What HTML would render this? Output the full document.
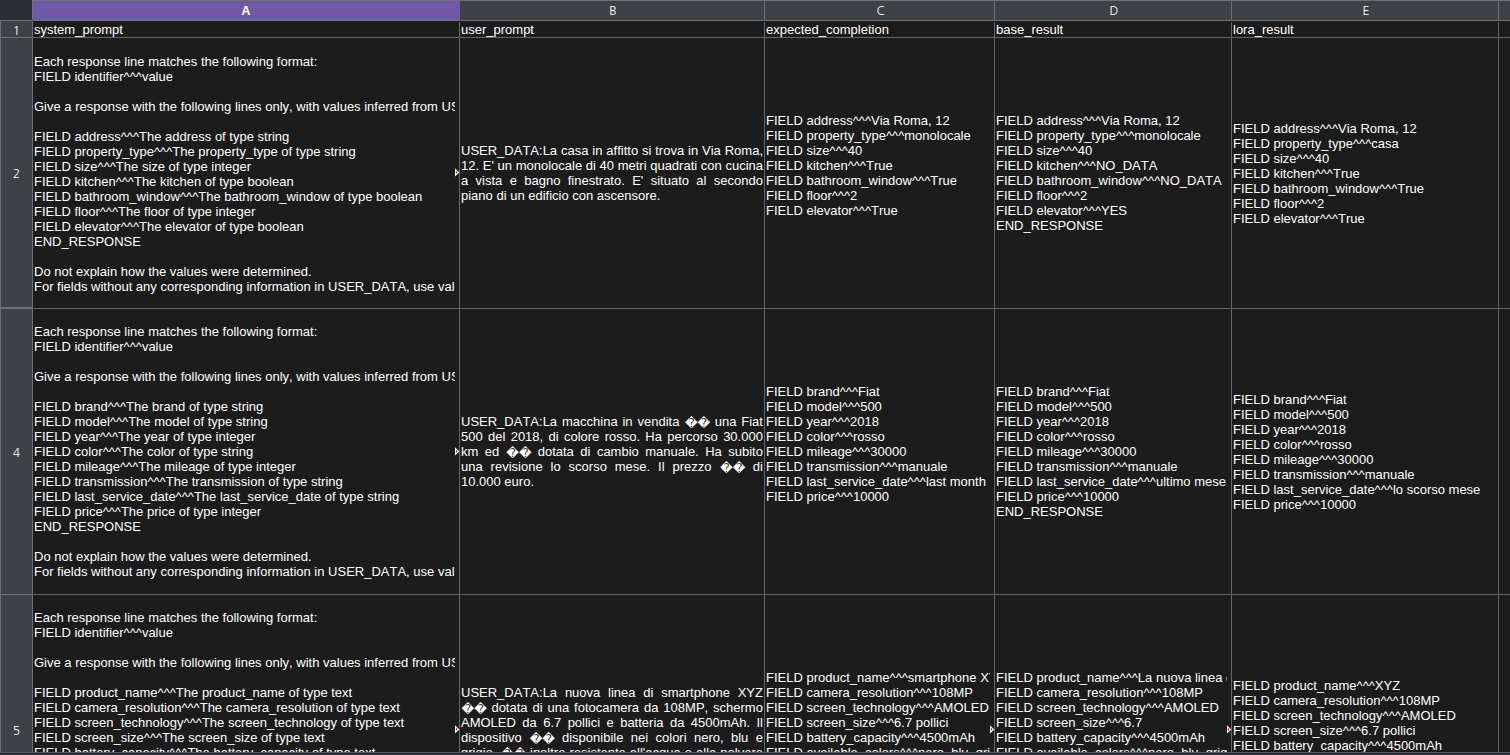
<!DOCTYPE html>
<html lang="it"><head><meta charset="utf-8"><title>sheet</title>
<style>
html,body{margin:0;padding:0}
body{width:1510px;height:755px;overflow:hidden;background:#1c1c1c;position:relative;font-family:"Liberation Sans",sans-serif;font-size:13px;line-height:15px;color:#ffffff;font-kerning:none}
.a{position:absolute}
.l{position:absolute;white-space:pre;height:15px;line-height:15px;overflow:visible}
.c{position:absolute;overflow:hidden}
.j{position:absolute;height:15px;line-height:15px;display:flex;justify-content:space-between;align-items:baseline;flex-wrap:nowrap;white-space:pre}
.jl{position:absolute;height:15px;line-height:15px;white-space:pre}
.h{position:absolute;text-align:center;font-family:"NanumGothic","Noto Sans CJK SC","DejaVu Sans",sans-serif;color:#ffffff}
.r{font-family:"DejaVu Sans",sans-serif;font-size:12.3px;position:relative;top:1px;left:0.6px;line-height:1px;margin-right:0.3px}

</style></head><body>
<div class="a" style="left:0;top:0;width:32px;height:20px;background:#2b2e33"></div>
<div class="a" style="left:32px;top:0;width:1478px;height:21px;background:#3e4146"></div>
<div class="a" style="left:32px;top:0;width:1478px;height:1px;background:#6e7276"></div>
<div class="a" style="left:0;top:20px;width:1510px;height:1px;background:#6d7175"></div>
<div class="a" style="left:33px;top:0;width:426px;height:1px;background:#6f7370"></div>
<div class="a" style="left:459px;top:0;width:1px;height:1px;background:#7058a8"></div>
<div class="a" style="left:33px;top:1px;width:427px;height:19px;background:#7058a8"></div>
<div class="a" style="left:33px;top:20px;width:427px;height:1px;background:#727571"></div>
<div class="a" style="left:32px;top:1px;width:1px;height:20px;background:#6d7175"></div>
<div class="a" style="left:764px;top:1px;width:1px;height:20px;background:#6d7175"></div>
<div class="a" style="left:994px;top:1px;width:1px;height:20px;background:#6d7175"></div>
<div class="a" style="left:1231px;top:1px;width:1px;height:20px;background:#6d7175"></div>
<div class="a" style="left:1498px;top:1px;width:1px;height:20px;background:#6d7175"></div>
<div class="a" style="left:32px;top:0;width:1px;height:20px;background:#6e7270"></div>
<div class="a" style="left:32px;top:20px;width:1px;height:1px;background:#2c2c2e"></div>
<div class="a" style="left:0;top:21px;width:33px;height:734px;background:#3e4146"></div>
<div class="a" style="left:0;top:20px;width:1px;height:735px;background:#6d7175"></div>
<div class="a" style="left:32px;top:21px;width:1px;height:734px;background:#6d7175"></div>
<div class="a" style="left:0;top:37px;width:33px;height:1px;background:#6d7175"></div>
<div class="a" style="left:0;top:307px;width:33px;height:2px;background:#6d7175"></div>
<div class="a" style="left:0;top:594px;width:33px;height:1px;background:#6d7175"></div>
<div class="a" style="left:459px;top:22px;width:1px;height:733px;background:#666666"></div>
<div class="a" style="left:764px;top:22px;width:1px;height:733px;background:#666666"></div>
<div class="a" style="left:994px;top:22px;width:1px;height:733px;background:#666666"></div>
<div class="a" style="left:1231px;top:22px;width:1px;height:733px;background:#666666"></div>
<div class="a" style="left:1498px;top:22px;width:1px;height:733px;background:#666666"></div>
<div class="a" style="left:33px;top:37px;width:1477px;height:1px;background:#666666"></div>
<div class="a" style="left:33px;top:308px;width:1477px;height:1px;background:#666666"></div>
<div class="a" style="left:33px;top:594px;width:1477px;height:1px;background:#666666"></div>
<div class="h" style="left:33.1px;top:1px;width:426px;height:19px;line-height:19px;font-size:11.5px;transform:scaleX(1.12);font-weight:bold;color:#fff;font-family:'Noto Sans CJK SC','DejaVu Sans',sans-serif">A</div>
<div class="h" style="left:461px;top:2px;width:304px;height:19px;line-height:19px;font-size:12.2px">B</div>
<div class="h" style="left:766px;top:2px;width:229px;height:19px;line-height:19px;font-size:12.2px">C</div>
<div class="h" style="left:996px;top:2px;width:236px;height:19px;line-height:19px;font-size:12.2px">D</div>
<div class="h" style="left:1233px;top:2px;width:266px;height:19px;line-height:19px;font-size:12.2px">E</div>
<div class="h" style="left:1px;top:21px;width:31px;height:20px;line-height:20px;font-size:12.2px;">1</div>
<div class="h" style="left:1px;top:164px;width:31px;height:20px;line-height:20px;font-size:12.2px;">2</div>
<div class="h" style="left:1px;top:442.5px;width:31px;height:20px;line-height:20px;font-size:12.2px;">4</div>
<div class="h" style="left:1px;top:721px;width:31px;height:20px;line-height:20px;font-size:12.2px;">5</div>
<div class="c" style="left:33px;top:21px;width:426px;height:16px">
<div class="l" style="left:1px;top:1px">system_prompt</div>
</div>
<div class="c" style="left:460px;top:21px;width:304px;height:16px">
<div class="l" style="left:1px;top:1px">user_prompt</div>
</div>
<div class="c" style="left:765px;top:21px;width:229px;height:16px">
<div class="l" style="left:1px;top:1px">expected_completion</div>
</div>
<div class="c" style="left:995px;top:21px;width:236px;height:16px">
<div class="l" style="left:1px;top:1px">base_result</div>
</div>
<div class="c" style="left:1232px;top:21px;width:266px;height:16px">
<div class="l" style="left:1px;top:1px">lora_result</div>
</div>
<div class="c" style="left:33px;top:38px;width:422px;height:270px">
<div class="l" style="left:1px;top:16px">Each response line matches the following format:</div>
<div class="l" style="left:1px;top:31px">FIELD identifier^^^value</div>
<div class="l" style="left:1px;top:61px">Give a response with the following lines only, with values inferred from USER_DATA:</div>
<div class="l" style="left:1px;top:91px">FIELD address^^^The address of type string</div>
<div class="l" style="left:1px;top:106px">FIELD property_type^^^The property_type of type string</div>
<div class="l" style="left:1px;top:121px">FIELD size^^^The size of type integer</div>
<div class="l" style="left:1px;top:136px">FIELD kitchen^^^The kitchen of type boolean</div>
<div class="l" style="left:1px;top:151px">FIELD bathroom_window^^^The bathroom_window of type boolean</div>
<div class="l" style="left:1px;top:166px">FIELD floor^^^The floor of type integer</div>
<div class="l" style="left:1px;top:181px">FIELD elevator^^^The elevator of type boolean</div>
<div class="l" style="left:1px;top:196px">END_RESPONSE</div>
<div class="l" style="left:1px;top:226px">Do not explain how the values were determined.</div>
<div class="l" style="left:1px;top:241px">For fields without any corresponding information in USER_DATA, use val</div>
</div>
<div class="c" style="left:460px;top:38px;width:304px;height:270px">
<div class="j" style="left:1px;top:105px;width:302px"><span>USER_DATA:La</span> <span>casa</span> <span>in</span> <span>affitto</span> <span>si</span> <span>trova</span> <span>in</span> <span>Via</span> <span>Roma,</span></div>
<div class="j" style="left:1px;top:120px;width:302px"><span>12.</span> <span>E'</span> <span>un</span> <span>monolocale</span> <span>di</span> <span>40</span> <span>metri</span> <span>quadrati</span> <span>con</span> <span>cucina</span></div>
<div class="j" style="left:1px;top:135px;width:302px"><span>a</span> <span>vista</span> <span>e</span> <span>bagno</span> <span>finestrato.</span> <span>E'</span> <span>situato</span> <span>al</span> <span>secondo</span></div>
<div class="jl" style="left:1px;top:150px">piano di un edificio con ascensore.</div>
</div>
<div class="c" style="left:765px;top:38px;width:229px;height:270px">
<div class="l" style="left:1px;top:75px">FIELD address^^^Via Roma, 12</div>
<div class="l" style="left:1px;top:90px">FIELD property_type^^^monolocale</div>
<div class="l" style="left:1px;top:105px">FIELD size^^^40</div>
<div class="l" style="left:1px;top:120px">FIELD kitchen^^^True</div>
<div class="l" style="left:1px;top:135px">FIELD bathroom_window^^^True</div>
<div class="l" style="left:1px;top:150px">FIELD floor^^^2</div>
<div class="l" style="left:1px;top:165px">FIELD elevator^^^True</div>
</div>
<div class="c" style="left:995px;top:38px;width:236px;height:270px">
<div class="l" style="left:1px;top:75px">FIELD address^^^Via Roma, 12</div>
<div class="l" style="left:1px;top:90px">FIELD property_type^^^monolocale</div>
<div class="l" style="left:1px;top:105px">FIELD size^^^40</div>
<div class="l" style="left:1px;top:120px">FIELD kitchen^^^NO_DATA</div>
<div class="l" style="left:1px;top:135px">FIELD bathroom_window^^^NO_DATA</div>
<div class="l" style="left:1px;top:150px">FIELD floor^^^2</div>
<div class="l" style="left:1px;top:165px">FIELD elevator^^^YES</div>
<div class="l" style="left:1px;top:180px">END_RESPONSE</div>
</div>
<div class="c" style="left:1232px;top:38px;width:266px;height:270px">
<div class="l" style="left:1px;top:83px">FIELD address^^^Via Roma, 12</div>
<div class="l" style="left:1px;top:98px">FIELD property_type^^^casa</div>
<div class="l" style="left:1px;top:113px">FIELD size^^^40</div>
<div class="l" style="left:1px;top:128px">FIELD kitchen^^^True</div>
<div class="l" style="left:1px;top:143px">FIELD bathroom_window^^^True</div>
<div class="l" style="left:1px;top:158px">FIELD floor^^^2</div>
<div class="l" style="left:1px;top:173px">FIELD elevator^^^True</div>
</div>
<div class="c" style="left:33px;top:309px;width:422px;height:285px">
<div class="l" style="left:1px;top:15px">Each response line matches the following format:</div>
<div class="l" style="left:1px;top:30px">FIELD identifier^^^value</div>
<div class="l" style="left:1px;top:60px">Give a response with the following lines only, with values inferred from USER_DATA:</div>
<div class="l" style="left:1px;top:90px">FIELD brand^^^The brand of type string</div>
<div class="l" style="left:1px;top:105px">FIELD model^^^The model of type string</div>
<div class="l" style="left:1px;top:120px">FIELD year^^^The year of type integer</div>
<div class="l" style="left:1px;top:135px">FIELD color^^^The color of type string</div>
<div class="l" style="left:1px;top:150px">FIELD mileage^^^The mileage of type integer</div>
<div class="l" style="left:1px;top:165px">FIELD transmission^^^The transmission of type string</div>
<div class="l" style="left:1px;top:180px">FIELD last_service_date^^^The last_service_date of type string</div>
<div class="l" style="left:1px;top:195px">FIELD price^^^The price of type integer</div>
<div class="l" style="left:1px;top:210px">END_RESPONSE</div>
<div class="l" style="left:1px;top:240px">Do not explain how the values were determined.</div>
<div class="l" style="left:1px;top:255px">For fields without any corresponding information in USER_DATA, use val</div>
</div>
<div class="c" style="left:460px;top:309px;width:304px;height:285px">
<div class="j" style="left:1px;top:105px;width:302px"><span>USER_DATA:La</span> <span>macchina</span> <span>in</span> <span>vendita</span> <span class="r">��</span> <span>una</span> <span>Fiat</span></div>
<div class="j" style="left:1px;top:120px;width:302px"><span>500</span> <span>del</span> <span>2018,</span> <span>di</span> <span>colore</span> <span>rosso.</span> <span>Ha</span> <span>percorso</span> <span>30.000</span></div>
<div class="j" style="left:1px;top:135px;width:302px"><span>km</span> <span>ed</span> <span class="r">��</span> <span>dotata</span> <span>di</span> <span>cambio</span> <span>manuale.</span> <span>Ha</span> <span>subito</span></div>
<div class="j" style="left:1px;top:150px;width:302px"><span>una</span> <span>revisione</span> <span>lo</span> <span>scorso</span> <span>mese.</span> <span>Il</span> <span>prezzo</span> <span class="r">��</span> <span>di</span></div>
<div class="jl" style="left:1px;top:165px">10.000 euro.</div>
</div>
<div class="c" style="left:765px;top:309px;width:229px;height:285px">
<div class="l" style="left:1px;top:75px">FIELD brand^^^Fiat</div>
<div class="l" style="left:1px;top:90px">FIELD model^^^500</div>
<div class="l" style="left:1px;top:105px">FIELD year^^^2018</div>
<div class="l" style="left:1px;top:120px">FIELD color^^^rosso</div>
<div class="l" style="left:1px;top:135px">FIELD mileage^^^30000</div>
<div class="l" style="left:1px;top:150px">FIELD transmission^^^manuale</div>
<div class="l" style="left:1px;top:165px">FIELD last_service_date^^^last month</div>
<div class="l" style="left:1px;top:180px">FIELD price^^^10000</div>
</div>
<div class="c" style="left:995px;top:309px;width:236px;height:285px">
<div class="l" style="left:1px;top:75px">FIELD brand^^^Fiat</div>
<div class="l" style="left:1px;top:90px">FIELD model^^^500</div>
<div class="l" style="left:1px;top:105px">FIELD year^^^2018</div>
<div class="l" style="left:1px;top:120px">FIELD color^^^rosso</div>
<div class="l" style="left:1px;top:135px">FIELD mileage^^^30000</div>
<div class="l" style="left:1px;top:150px">FIELD transmission^^^manuale</div>
<div class="l" style="left:1px;top:165px">FIELD last_service_date^^^ultimo mese</div>
<div class="l" style="left:1px;top:180px">FIELD price^^^10000</div>
<div class="l" style="left:1px;top:195px">END_RESPONSE</div>
</div>
<div class="c" style="left:1232px;top:309px;width:266px;height:285px">
<div class="l" style="left:1px;top:83px">FIELD brand^^^Fiat</div>
<div class="l" style="left:1px;top:98px">FIELD model^^^500</div>
<div class="l" style="left:1px;top:113px">FIELD year^^^2018</div>
<div class="l" style="left:1px;top:128px">FIELD color^^^rosso</div>
<div class="l" style="left:1px;top:143px">FIELD mileage^^^30000</div>
<div class="l" style="left:1px;top:158px">FIELD transmission^^^manuale</div>
<div class="l" style="left:1px;top:173px">FIELD last_service_date^^^lo scorso mese</div>
<div class="l" style="left:1px;top:188px">FIELD price^^^10000</div>
</div>
<div class="c" style="left:33px;top:595px;width:422px;height:157px">
<div class="l" style="left:1px;top:15px">Each response line matches the following format:</div>
<div class="l" style="left:1px;top:30px">FIELD identifier^^^value</div>
<div class="l" style="left:1px;top:60px">Give a response with the following lines only, with values inferred from USER_DATA:</div>
<div class="l" style="left:1px;top:90px">FIELD product_name^^^The product_name of type text</div>
<div class="l" style="left:1px;top:105px">FIELD camera_resolution^^^The camera_resolution of type text</div>
<div class="l" style="left:1px;top:120px">FIELD screen_technology^^^The screen_technology of type text</div>
<div class="l" style="left:1px;top:135px">FIELD screen_size^^^The screen_size of type text</div>
<div class="l" style="left:1px;top:150px">FIELD battery_capacity^^^The battery_capacity of type text</div>
</div>
<div class="c" style="left:460px;top:595px;width:304px;height:157px">
<div class="j" style="left:1px;top:90px;width:302px"><span>USER_DATA:La</span> <span>nuova</span> <span>linea</span> <span>di</span> <span>smartphone</span> <span>XYZ</span></div>
<div class="j" style="left:1px;top:105px;width:302px"><span class="r">��</span> <span>dotata</span> <span>di</span> <span>una</span> <span>fotocamera</span> <span>da</span> <span>108MP,</span> <span>schermo</span></div>
<div class="j" style="left:1px;top:120px;width:302px"><span>AMOLED</span> <span>da</span> <span>6.7</span> <span>pollici</span> <span>e</span> <span>batteria</span> <span>da</span> <span>4500mAh.</span> <span>Il</span></div>
<div class="j" style="left:1px;top:135px;width:302px"><span>dispositivo</span> <span class="r">��</span> <span>disponibile</span> <span>nei</span> <span>colori</span> <span>nero,</span> <span>blu</span> <span>e</span></div>
<div class="j" style="left:1px;top:150px;width:302px"><span>grigio.</span> <span class="r">��</span> <span>inoltre</span> <span>resistente</span> <span>all'acqua</span> <span>e</span> <span>alla</span> <span>polvere</span></div>
<div class="jl" style="left:1px;top:165px">con certificazione IP68.</div>
</div>
<div class="c" style="left:765px;top:595px;width:225px;height:157px">
<div class="l" style="left:1px;top:75px">FIELD product_name^^^smartphone XYZ</div>
<div class="l" style="left:1px;top:90px">FIELD camera_resolution^^^108MP</div>
<div class="l" style="left:1px;top:105px">FIELD screen_technology^^^AMOLED</div>
<div class="l" style="left:1px;top:120px">FIELD screen_size^^^6.7 pollici</div>
<div class="l" style="left:1px;top:135px">FIELD battery_capacity^^^4500mAh</div>
<div class="l" style="left:1px;top:150px">FIELD available_colors^^^nero, blu, grigio</div>
</div>
<div class="c" style="left:995px;top:595px;width:232px;height:157px">
<div class="l" style="left:1px;top:75px">FIELD product_name^^^La nuova linea di smartphone XYZ</div>
<div class="l" style="left:1px;top:90px">FIELD camera_resolution^^^108MP</div>
<div class="l" style="left:1px;top:105px">FIELD screen_technology^^^AMOLED</div>
<div class="l" style="left:1px;top:120px">FIELD screen_size^^^6.7</div>
<div class="l" style="left:1px;top:135px">FIELD battery_capacity^^^4500mAh</div>
<div class="l" style="left:1px;top:150px">FIELD available_colors^^^nero, blu, grigio</div>
</div>
<div class="c" style="left:1232px;top:595px;width:266px;height:157px">
<div class="l" style="left:1px;top:83px">FIELD product_name^^^XYZ</div>
<div class="l" style="left:1px;top:98px">FIELD camera_resolution^^^108MP</div>
<div class="l" style="left:1px;top:113px">FIELD screen_technology^^^AMOLED</div>
<div class="l" style="left:1px;top:128px">FIELD screen_size^^^6.7 pollici</div>
<div class="l" style="left:1px;top:143px">FIELD battery_capacity^^^4500mAh</div>
</div>
<svg class="a" style="left:455px;top:166px" width="5" height="12" viewBox="0 0 5 12"><polygon points="0,2.35 4.3,6.45 0,10.55" fill="#ffffff"/><ellipse cx="1.6" cy="6.25" rx="0.65" ry="1.35" fill="#ff0000"/></svg>
<svg class="a" style="left:455px;top:445px" width="5" height="12" viewBox="0 0 5 12"><polygon points="0,2.35 4.3,6.45 0,10.55" fill="#ffffff"/><ellipse cx="1.6" cy="6.25" rx="0.65" ry="1.35" fill="#ff0000"/></svg>
<svg class="a" style="left:455px;top:723px" width="5" height="12" viewBox="0 0 5 12"><polygon points="0,2.35 4.3,6.45 0,10.55" fill="#ffffff"/><ellipse cx="1.6" cy="6.25" rx="0.65" ry="1.35" fill="#ff0000"/></svg>
<svg class="a" style="left:990px;top:723px" width="5" height="12" viewBox="0 0 5 12"><polygon points="0,2.35 4.3,6.45 0,10.55" fill="#ffffff"/><ellipse cx="1.6" cy="6.25" rx="0.65" ry="1.35" fill="#ff0000"/></svg>
<svg class="a" style="left:1227px;top:723px" width="5" height="12" viewBox="0 0 5 12"><polygon points="0,2.35 4.3,6.45 0,10.55" fill="#ffffff"/><ellipse cx="1.6" cy="6.25" rx="0.65" ry="1.35" fill="#ff0000"/></svg>
<div class="a" style="left:0;top:752px;width:1510px;height:3px;background:#292b30"></div>
<div class="a" style="left:0;top:752px;width:1510px;height:1px;background:#54585b"></div>
</body></html>
